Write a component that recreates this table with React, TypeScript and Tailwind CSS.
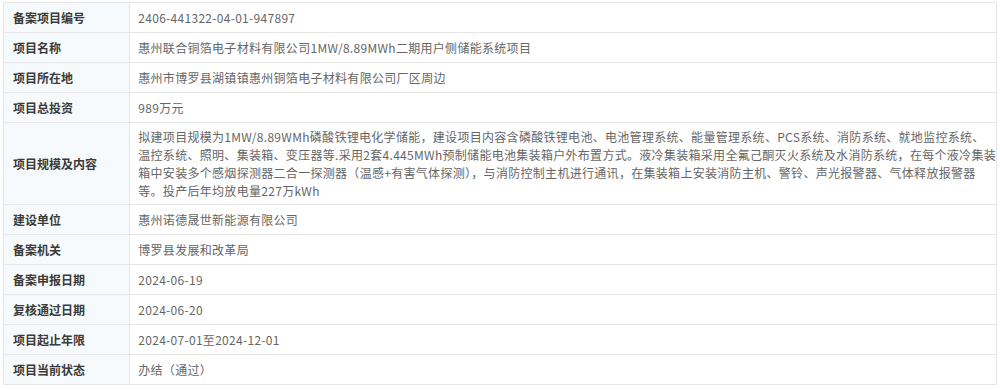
const rows: { label: string; value: React.ReactNode; tall?: boolean }[] = [
  { label: "备案项目编号", value: "2406-441322-04-01-947897" },
  { label: "项目名称", value: "惠州联合铜箔电子材料有限公司1MW/8.89MWh二期用户侧储能系统项目" },
  { label: "项目所在地", value: "惠州市博罗县湖镇镇惠州铜箔电子材料有限公司厂区周边" },
  { label: "项目总投资", value: "989万元" },
  {
    label: "项目规模及内容",
    tall: true,
    value: (
      <>
        拟建项目规模为1MW/8.89WMh磷酸铁锂电化学储能，建设项目内容含磷酸铁锂电池、电池管理系统、能量管理系统、PCS系统、消防系统、就地监控系统、
        <br />
        温控系统、照明、集装箱、变压器等.采用2套4.445MWh预制储能电池集装箱户外布置方式。液冷集装箱采用全氟己酮灭火系统及水消防系统，在每个液冷集装
        <br />
        箱中安装多个感烟探测器二合一探测器（温感+有害气体探测），与消防控制主机进行通讯，在集装箱上安装消防主机、警铃、声光报警器、气体释放报警器
        <br />
        等。投产后年均放电量227万kWh
      </>
    ),
  },
  { label: "建设单位", value: "惠州诺德晟世新能源有限公司" },
  { label: "备案机关", value: "博罗县发展和改革局" },
  { label: "备案申报日期", value: "2024-06-19" },
  { label: "复核通过日期", value: "2024-06-20" },
  { label: "项目起止年限", value: "2024-07-01至2024-12-01" },
  { label: "项目当前状态", value: "办结（通过）" },
];

export default function App() {
  return (
    <div className="w-[1000px] h-[390px] bg-white pl-[3px] pt-[2px] font-['Microsoft_YaHei','Noto_Sans_CJK_SC',sans-serif] text-[12px]">
      <table className="w-[994px] border-collapse border border-[#e3e3e3]">
        <tbody>
          {rows.map((r) => (
            <tr key={r.label} className={r.tall ? "h-[82px]" : "h-[30px]"}>
              <td className="w-[130px] border border-[#e6e6e6] bg-[#f6fafc] pl-[9px] font-bold text-[#3a3a3a] align-middle">
                {r.label}
              </td>
              <td
                className={
                  "border border-[#e6e6e6] pl-[8px] text-[#666] tracking-[0.3px] align-middle whitespace-nowrap " +
                  (r.tall ? "leading-[18px] py-[4px]" : "")
                }
              >
                {r.value}
              </td>
            </tr>
          ))}
        </tbody>
      </table>
    </div>
  );
}
